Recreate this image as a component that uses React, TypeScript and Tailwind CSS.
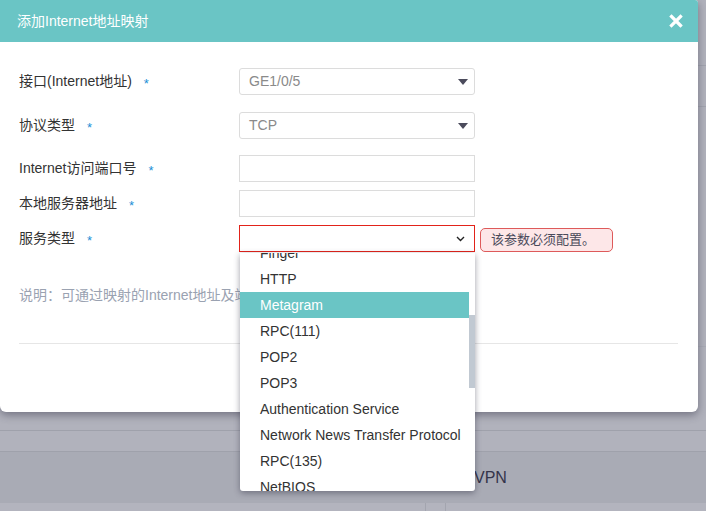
import React from "react";

const font = { fontFamily: '"Liberation Sans", "Noto Sans CJK SC", Arial, sans-serif' };

const options = [
  "Finger",
  "HTTP",
  "Metagram",
  "RPC(111)",
  "POP2",
  "POP3",
  "Authentication Service",
  "Network News Transfer Protocol",
  "RPC(135)",
  "NetBIOS",
  "IMAP",
];

function Caret() {
  return (
    <svg width="10" height="6" viewBox="0 0 10 6" className="shrink-0">
      <path d="M0 0 L10 0 L5 6 Z" fill="#4b4b5c" />
    </svg>
  );
}

function Label({ text }: { text: string }) {
  return (
    <div className="w-[220px] shrink-0 text-[14px] text-[#333] flex items-center">
      <span>{text}</span>
      <span className="ml-[12px] text-[#1a8fd6] text-[13px] leading-none pt-[3px]">*</span>
    </div>
  );
}

export default function App() {
  return (
    <div className="relative w-[706px] h-[511px] overflow-hidden bg-[#b1b2bc]" style={font}>
      {/* page behind the overlay */}
      <div className="flex flex-col h-full">
        <div className="h-[66px] border-b border-[#a3a5af]" />
        <div className="h-[41px] border-b border-[#a3a5af]" />
        <div className="h-[240px] border-b border-[#a9abb5]" />
        <div className="h-[84px] border-b border-[#9fa1ab]" />
        <div className="h-[21px] border-b border-[#9fa1ab]" />
        <div className="h-[51px] bg-[#a9abb5] flex items-center pl-[474px] text-[16px] text-[#34344a]">VPN</div>
        <div className="flex-1 bg-[#b3b4be] flex">
          <div className="w-[426px] border-r border-[#a3a5af]" />
          <div className="w-[20px] border-r border-[#a3a5af]" />
        </div>
      </div>

      {/* modal */}
      <div className="absolute left-0 top-0 w-[698px] h-[412px] bg-white rounded-tr-[3px] rounded-b-[6px] shadow-[0_3px_8px_rgba(40,40,60,0.45)] flex flex-col">
        <div className="h-[42px] bg-[#6ac5c5] rounded-tr-[3px] flex items-center justify-between pl-[17px] pr-[15px]">
          <span className="text-white text-[14px]">添加Internet地址映射</span>
          <svg width="14" height="14" viewBox="0 0 14 14">
            <path d="M2.5 2.5 L11.5 11.5 M11.5 2.5 L2.5 11.5" stroke="white" strokeWidth="3.2" strokeLinecap="square" />
          </svg>
        </div>

        <div className="pl-[19px] pr-[20px] flex flex-col">
          <div className="flex mt-[26px] h-[27px]">
            <Label text="接口(Internet地址)" />
            <div className="w-[236px] h-[27px] border border-[#dcdcdc] rounded-[3px] flex items-center justify-between pl-[9px] pr-[6px] text-[14px] text-[#8a8a8a]">
              <span>GE1/0/5</span>
              <Caret />
            </div>
          </div>
          <div className="flex mt-[17px] h-[27px]">
            <Label text="协议类型" />
            <div className="w-[236px] h-[27px] border border-[#dcdcdc] rounded-[3px] flex items-center justify-between pl-[9px] pr-[6px] text-[14px] text-[#8a8a8a]">
              <span>TCP</span>
              <Caret />
            </div>
          </div>
          <div className="flex mt-[16px] h-[27px]">
            <Label text="Internet访问端口号" />
            <div className="w-[236px] h-[27px] border border-[#dcdcdc]" />
          </div>
          <div className="flex mt-[8px] h-[27px]">
            <Label text="本地服务器地址" />
            <div className="w-[236px] h-[27px] border border-[#dcdcdc]" />
          </div>
          <div className="flex mt-[8px] h-[27px] items-center">
            <Label text="服务类型" />
            <div className="w-[236px] h-[27px] border border-[#e2231a] flex items-center justify-end pr-[9px]">
              <svg width="9" height="6" viewBox="0 0 9 6">
                <path d="M1 1 L4.5 4.5 L8 1" fill="none" stroke="#222" strokeWidth="1.4" />
              </svg>
            </div>
            <div className="ml-[5px] mt-[3px] w-[133px] h-[24px] bg-[#fde7e8] border border-[#de5a5a] rounded-[5px] flex items-center pl-[10px] text-[13px] text-[#4a4a5a]">
              该参数必须配置。
            </div>
          </div>

          <div className="mt-[33px] text-[14px] text-[#9aa2b1]">
            说明：可通过映射的Internet地址及端口号访问内网服务器。
          </div>

          <div className="mt-[37px] h-px bg-[#e6e6e6]" />
        </div>
      </div>

      {/* open dropdown list */}
      <div className="absolute left-[240px] top-[253px] w-[235px] h-[238px] bg-white rounded-b-[3px] shadow-[0_2px_6px_rgba(40,40,60,0.45)] overflow-hidden">
        <div className="-mt-[13px] flex flex-col">
          {options.map((o) => (
            <div
              key={o}
              className={
                o === "Metagram"
                  ? "w-[229px] h-[26px] flex items-center pl-[20px] text-[14px] bg-[#6ac5c5] text-white"
                  : "w-[229px] h-[26px] flex items-center pl-[20px] text-[14px] text-[#333] whitespace-nowrap"
              }
            >
              {o}
            </div>
          ))}
        </div>
        <div className="absolute right-0 top-[62px] w-[6px] h-[73px] bg-[#c1c9d2]" />
      </div>
    </div>
  );
}
